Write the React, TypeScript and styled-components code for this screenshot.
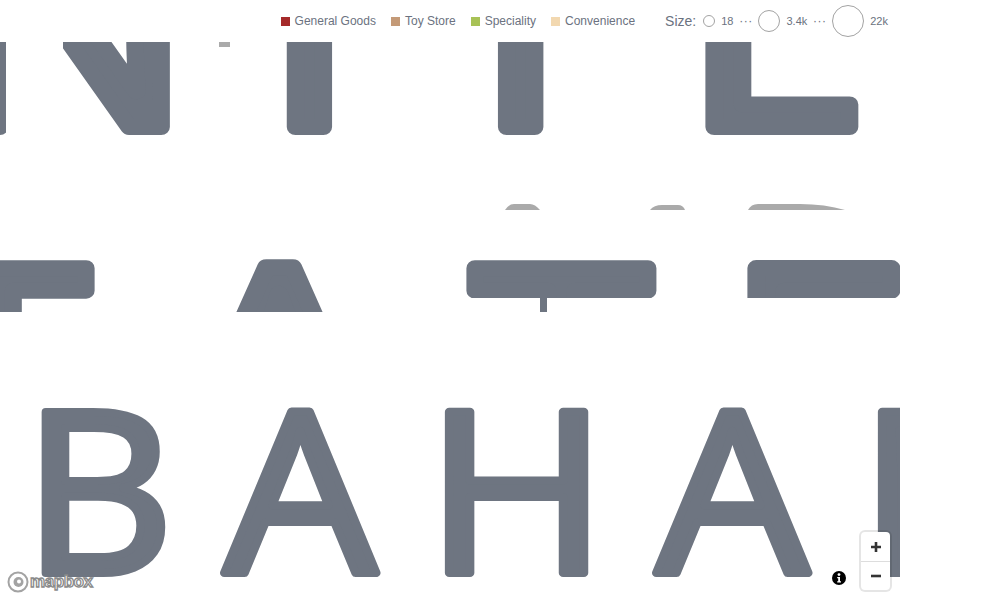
import styled, { createGlobalStyle } from "styled-components";

const GlobalStyle = createGlobalStyle`
  html, body {
    margin: 0;
    background: #fff;
  }
`;

const MapWrap = styled.div`
  position: relative;
  width: 900px;
  height: 600px;
  overflow: hidden;
  background: #fff;
  font-family: "Liberation Sans", Arial, sans-serif;
`;

const MapCanvas = styled.svg`
  display: block;
`;

const PlaceLabel = styled.text<{ $size: number; $halo: number }>`
  font-family: "Open Sans", sans-serif;
  font-weight: 500;
  font-size: ${(p) => p.$size}px;
  fill: #6e7581;
  stroke: #6e7581;
  stroke-width: ${(p) => p.$halo}px;
  stroke-linejoin: round;
`;

const Legend = styled.div`
  position: absolute;
  top: 0;
  left: 0;
  width: 888px;
  height: 42px;
  display: flex;
  align-items: center;
  justify-content: flex-end;
  background: #fff;
  color: #6b7280;
  font-size: 12px;
`;

const LegendItem = styled.div`
  display: flex;
  align-items: center;
  gap: 5px;
  margin-right: 15px;
`;

const Swatch = styled.span<{ $color: string }>`
  width: 9px;
  height: 9px;
  background: ${(p) => p.$color};
`;

const SizeScale = styled.div`
  display: flex;
  align-items: center;
  margin-left: 15px;
`;

const SizeTitle = styled.span`
  font-size: 14px;
  margin-right: 7px;
`;

const SizeCircle = styled.span<{ $d: number }>`
  box-sizing: border-box;
  width: ${(p) => p.$d}px;
  height: ${(p) => p.$d}px;
  border: 1px solid #a3a3a3;
  border-radius: 50%;
  margin-right: 6px;
`;

const SizeValue = styled.span`
  font-size: 11px;
`;

const Dots = styled.span`
  font-size: 12px;
  letter-spacing: 0.5px;
  margin: 0 5.75px;
`;

const Attribution = styled.div`
  position: absolute;
  left: 7px;
  bottom: 6px;
  display: flex;
`;

const LogoText = styled.text`
  font-family: "Liberation Sans", sans-serif;
  font-weight: 700;
  font-size: 17px;
  fill: #fff;
  stroke: #8a8a8a;
  stroke-width: 1.3px;
`;

const InfoButton = styled.div`
  position: absolute;
  left: 832px;
  top: 571px;
  width: 14px;
  height: 14px;
  display: flex;
`;

const ZoomControl = styled.div`
  position: absolute;
  left: 861px;
  top: 532px;
  width: 29px;
  display: flex;
  flex-direction: column;
  background: #fff;
  border-radius: 4px;
  box-shadow: 0 0 0 2px rgba(0, 0, 0, 0.1);
`;

const ZoomButton = styled.button`
  width: 29px;
  height: 29px;
  padding: 0;
  border: 0;
  background: none;
  display: flex;
  align-items: center;
  justify-content: center;
  & + & {
    border-top: 1px solid #ddd;
  }
`;

const categories = [
  { name: "General Goods", color: "#a52a2a" },
  { name: "Toy Store", color: "#c49a77" },
  { name: "Speciality", color: "#a8c256" },
  { name: "Convenience", color: "#f2d8b0" },
];

// map label letters: [letter, x, horizontal stretch]
type Glyph = [string, number, number];

const unitedGlyphs: Glyph[] = [
  ["U", -208, 1.09],
  ["N", -59, 1.09],
  ["I", 262.7, 1.09],
  ["T", 428.3, 1.09],
  ["E", 681, 1.105],
];

const statesGlyphs: Glyph[] = [
  ["T", -89.8, 1.057],
  ["A", 167.4, 1.15],
  ["T", 472, 1.057],
  ["E", 723, 1.105],
];

const bahamasGlyphs: Glyph[] = [
  ["B", 23, 1.033],
  ["A", 224.3, 1.066],
  ["H", 425, 1.1],
  ["A", 656.3, 1.066],
  ["M", 858, 1.1],
];

function LabelRow({ glyphs, y, size, halo }: { glyphs: Glyph[]; y: number; size: number; halo: number }) {
  return (
    <>
      {glyphs.map(([letter, x, stretch], i) => (
        <PlaceLabel key={i} $size={size} $halo={halo} y={y} transform={`translate(${x} 0) scale(${stretch} 1)`}>
          {letter}
        </PlaceLabel>
      ))}
    </>
  );
}

function Legends() {
  return (
    <Legend>
      {categories.map((c) => (
        <LegendItem key={c.name}>
          <Swatch $color={c.color} />
          {c.name}
        </LegendItem>
      ))}
      <SizeScale>
        <SizeTitle>Size:</SizeTitle>
        <SizeCircle $d={12} />
        <SizeValue>18</SizeValue>
        <Dots>···</Dots>
        <SizeCircle $d={22} />
        <SizeValue>3.4k</SizeValue>
        <Dots>···</Dots>
        <SizeCircle $d={32} />
        <SizeValue>22k</SizeValue>
      </SizeScale>
    </Legend>
  );
}

export default function App() {
  return (
    <>
      <GlobalStyle />
      <MapWrap>
        <MapCanvas width={900} height={600} viewBox="0 0 900 600">
          <defs>
            <clipPath id="tile-top">
              <rect x={0} y={42} width={6} height={100} />
              <rect x={63} y={42} width={837} height={100} />
            </clipPath>
            <clipPath id="tile-mid">
              <rect x={0} y={258} width={467} height={54} />
              <rect x={467} y={258} width={433} height={40} />
              <rect x={540} y={298} width={7} height={14} />
            </clipPath>
          </defs>
          <rect x={219} y={42} width={11} height={5} fill="#aaa" />
          <path d="M505 210Q509 204 514 204H530Q535 204 540 210Z" fill="#aaa" />
          <path d="M650 210Q654 205 662 205H678Q683 205 685 210Z" fill="#aaa" />
          <path d="M748 210Q751 204 758 204H800Q825 204 845 210Z" fill="#aaa" />
          <g clipPath="url(#tile-top)">
            <LabelRow glyphs={unitedGlyphs} y={127} size={308} halo={16} />
          </g>
          <g clipPath="url(#tile-mid)">
            <LabelRow glyphs={statesGlyphs} y={488} size={308} halo={16} />
          </g>
          <LabelRow glyphs={bahamasGlyphs} y={573} size={226} halo={8} />
        </MapCanvas>
        <Legends />
        <Attribution>
          <svg width="88" height="24" viewBox="0 0 88 24">
            <circle cx="11" cy="12" r="9.5" fill="#fff" stroke="#a3a3a3" strokeWidth="2" />
            <circle cx="11.5" cy="12" r="5" fill="#a3a3a3" />
            <circle cx="12" cy="11.5" r="2" fill="#fff" />
            <LogoText x="23" y="17" textLength={63}>
              mapbox
            </LogoText>
          </svg>
        </Attribution>
        <InfoButton>
          <svg width="14" height="14" viewBox="0 0 14 14">
            <circle cx="7" cy="7" r="7" fill="#000" />
            <circle cx="7" cy="3.6" r="1.4" fill="#fff" />
            <path d="M5.2 6H8V10.2H9V11.4H5.2V10.2H6.2V7.2H5.2Z" fill="#fff" />
          </svg>
        </InfoButton>
        <ZoomControl>
          <ZoomButton aria-label="Zoom in">
            <svg width="12" height="12" viewBox="0 0 12 12">
              <path d="M6 1V11M1 6H11" stroke="#333" strokeWidth="2.6" />
            </svg>
          </ZoomButton>
          <ZoomButton aria-label="Zoom out">
            <svg width="12" height="12" viewBox="0 0 12 12">
              <path d="M1 6H11" stroke="#333" strokeWidth="2.6" />
            </svg>
          </ZoomButton>
        </ZoomControl>
      </MapWrap>
    </>
  );
}
